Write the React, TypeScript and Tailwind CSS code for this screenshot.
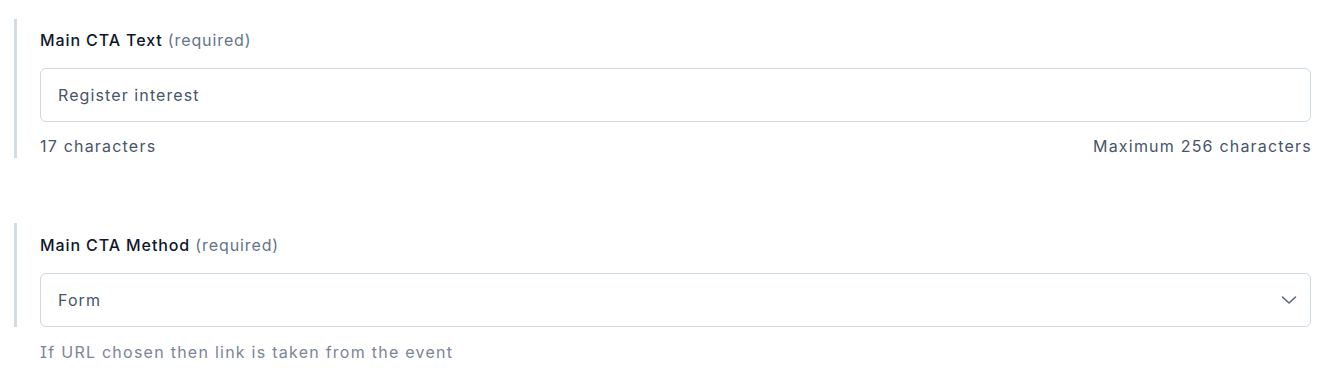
import React from "react";

export default function App() {
  return (
    <div className="bg-white w-[1330px] h-[370px] font-['Inter',sans-serif] pt-[19px] pl-[14px] pr-[19px]">
      <div className="border-l-[3px] border-[#d3dbe3] pl-[23px] pt-[9px]">
        <label className="block text-[16px] leading-[24px] text-[#0f172a] font-medium tracking-[0.9px]">
          Main CTA Text <span className="font-normal text-[#64748b]">(required)</span>
        </label>
        <div className="mt-[16px] h-[54px] rounded-[6px] border border-[#cfd9e3] bg-white flex items-center px-[17px] text-[16px] text-[#475569] tracking-[1.1px]">
          Register interest
        </div>
        <div className="mt-[12px] flex justify-between text-[16px] leading-[24px] text-[#475569] tracking-[1.2px]">
          <span>17 characters</span>
          <span className="-mr-[1px]">Maximum 256 characters</span>
        </div>
      </div>

      <div className="mt-[65px] border-l-[3px] border-[#d3dbe3] pl-[23px] pt-[10px]">
        <label className="block text-[16px] leading-[24px] text-[#0f172a] font-medium tracking-[0.9px]">
          Main CTA Method <span className="font-normal text-[#64748b]">(required)</span>
        </label>
        <div className="mt-[16px] h-[54px] rounded-[6px] border border-[#cfd9e3] bg-white flex items-center justify-between pl-[17px] pr-[13px] text-[16px] text-[#475569] tracking-[1.1px]">
          <span>Form</span>
          <svg width="16" height="16" viewBox="0 0 16 16" fill="none" stroke="#5b6678" strokeWidth="1.6" strokeLinecap="round" strokeLinejoin="round">
            <path d="M1.5 5 L8 11 L14.5 5" />
          </svg>
        </div>
      </div>
      <div className="ml-[26px] mt-[13px] text-[16px] leading-[24px] text-[#7b8596] tracking-[1.25px] [font-feature-settings:'cv08']">
        If URL chosen then link is taken from the event
      </div>
    </div>
  );
}
